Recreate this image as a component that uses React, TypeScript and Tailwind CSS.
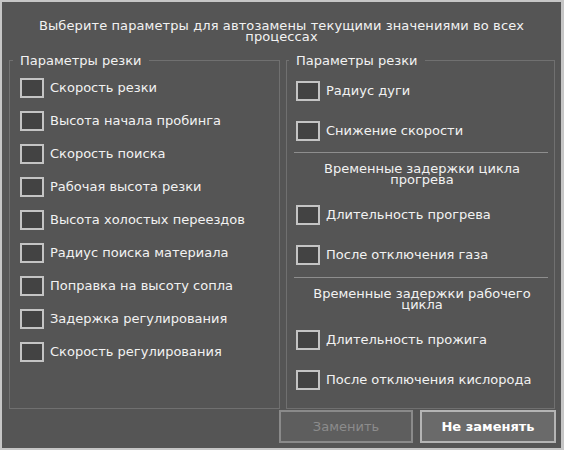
import React from "react";

const leftItems = [
    "Скорость резки",
    "Высота начала пробинга",
    "Скорость поиска",
    "Рабочая высота резки",
    "Высота холостых переездов",
    "Радиус поиска материала",
    "Поправка на высоту сопла",
    "Задержка регулирования",
    "Скорость регулирования",
];

function CheckRow({label, tall}: { label: string, tall?: boolean }) {
    return (
        <label className={tall ? "flex items-center h-[40px]" : "flex items-center h-[33px]"}>
            <span className="w-[24px] h-[20px] border-2 border-[#c4c4c4] bg-[#434343] shrink-0"/>
            <span className="ml-[6px] whitespace-nowrap">{label}</span>
        </label>
    );
}

function GroupTitle({children}: { children: React.ReactNode }) {
    return (
        <legend className="ml-[-7px] pl-[7px] pr-[8px] leading-[15px]">{children}</legend>
    );
}

export default function App() {
    return (
        <div
            className="w-[564px] h-[450px] bg-[#555555] border-t-2 border-l-2 border-b-2 border-r-[3px] border-[#c6c6c6] flex flex-col text-[13px] text-[#f2f2f2]"
            style={{fontFamily: '"DejaVu Sans", Verdana, sans-serif'}}>
            <div className="pt-[18px] text-center leading-[11px] px-[26px] tracking-[0.1px]">
                Выберите параметры для автозамены текущими значениями во всех процессах
            </div>

            <div className="flex gap-[6px] pl-[7px] pr-[6px] mt-[11px]">
                <fieldset className="w-[271px] h-[356px] border border-[#707070] pl-[10px]">
                    <GroupTitle>Параметры резки</GroupTitle>
                    <div className="pt-[3px] flex flex-col">
                        {leftItems.map((item) => (
                            <CheckRow key={item} label={item}/>
                        ))}
                    </div>
                </fieldset>

                <fieldset className="w-[269px] h-[356px] border border-[#707070] pl-[9px] pr-[6px]">
                    <GroupTitle>Параметры резки</GroupTitle>
                    <div className="pt-[3px] flex flex-col">
                        <CheckRow label="Радиус дуги" tall/>
                        <CheckRow label="Снижение скорости" tall/>
                        <div className="mt-[1px] ml-[-2px] h-px bg-[#8e8e8e]"/>
                        <div className="mt-[10px] text-center leading-[11px] px-[8px]">
                            Временные задержки цикла прогрева
                        </div>
                        <div className="mt-[10px]">
                            <CheckRow label="Длительность прогрева" tall/>
                            <CheckRow label="После отключения газа" tall/>
                        </div>
                        <div className="mt-[2px] ml-[-2px] h-px bg-[#8e8e8e]"/>
                        <div className="mt-[10px] text-center leading-[11px] px-[8px]">
                            Временные задержки рабочего цикла
                        </div>
                        <div className="mt-[10px]">
                            <CheckRow label="Длительность прожига" tall/>
                            <CheckRow label="После отключения кислорода" tall/>
                        </div>
                    </div>
                </fieldset>
            </div>

            <div className="flex justify-end gap-[7px] pr-[5px] mt-[1px]">
                <button
                    disabled
                    className="w-[134px] h-[33px] border-2 border-[#8a8a8a] bg-[#5e5e5e] text-[#8c8c8c]">
                    Заменить
                </button>
                <button className="w-[136px] h-[33px] border-2 border-[#b4b4b4] bg-[#6a6a6a] text-white font-bold">
                    Не заменять
                </button>
            </div>
        </div>
    );
}
